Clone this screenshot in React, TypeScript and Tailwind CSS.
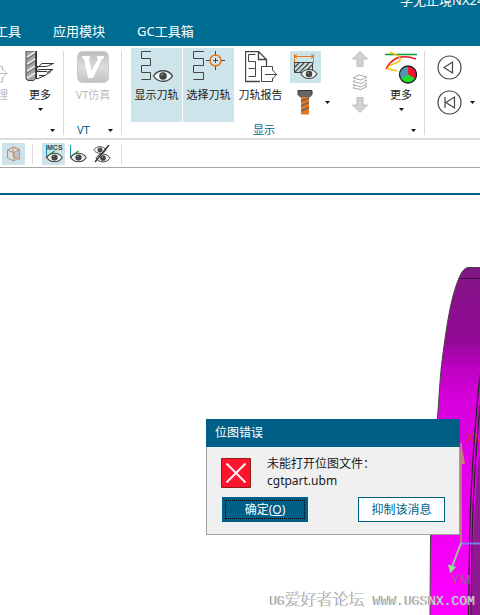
import type { ReactNode } from "react";

const MENU_ITEMS = ["工具", "应用模块", "GC工具箱"];

const Caret = () => (
  <svg width="5" height="3" viewBox="0 0 5 3" className="shrink-0" aria-hidden="true">
    <path d="M0 0h5L2.5 3z" fill="#111" />
  </svg>
);

const Divider = ({ className = "h-[84px]" }: { className?: string }) => (
  <div className={`w-px shrink-0 bg-[#d9d9d9] ${className}`} />
);

// Outline of the eye shared by the "show" icons, drawn around (x, y)
const Eye = ({ x, y, s = 1 }: { x: number; y: number; s?: number }) => (
  <g transform={`translate(${x} ${y}) scale(${s})`}>
    <path d="M-9.5 0C-5 -7 5 -7 9.5 0C5 7 -5 7 -9.5 0z" fill="#eef5f6" stroke="#444" strokeWidth="1.3" />
    <circle r="3.8" fill="#444" />
    <circle cx="-1" cy="-1.3" r="0.9" fill="#999" />
  </g>
);

const PostIcon = () => (
  <svg width="32" height="32" viewBox="0 0 32 32" fill="none" stroke="#bbb">
    <path d="M20 15.500h6.500v4M26.500 26v5H20" />
    <path d="M22 22.500h9M26 17.500l5 5-5 5" />
  </svg>
);

const MillIcon = () => (
  <svg width="32" height="32" viewBox="0 0 32 32" fill="none">
    <path d="M2 0h9.500v28l-2 1.500H4L2 28z" fill="#a4a4a4" stroke="#444" />
    <path d="M3 6l8-5M3 13l8-5M3 20l8-5M3 27l8-5" stroke="#e4e4e4" strokeWidth="2" />
    <path d="M3 8l8-5M3 15l8-5M3 22l8-5" stroke="#666" />
    <path d="M12.500 0v28" stroke="#333" />
    <path d="M13 17l5-4.500h12M13 15.500h9.500l6-2.500M13 19l4-.5h12l-6 3M13 20.500h10M15 24.500h6l6-4M13 28l8-3.500" stroke="#333" />
  </svg>
);

const VtIcon = () => (
  <svg width="32" height="32" viewBox="0 0 32 32">
    <defs>
      <linearGradient id="vt" x1="0" y1="0" x2="0" y2="1">
        <stop offset="0" stopColor="#bcbcbc" />
        <stop offset="0.5" stopColor="#dcdcdc" />
        <stop offset="1" stopColor="#c2c2c2" />
      </linearGradient>
    </defs>
    <rect x="0.500" y="0.500" width="31" height="31" rx="5" fill="url(#vt)" stroke="#ccc" />
    <path d="M5 5h8v2l-1 1 2.500 12L21 8l-1-1V5h7v2l-2 1-9 19h-5L7 8 5 7z" fill="#fff" />
  </svg>
);

const ShowPathIcon = () => (
  <svg width="32" height="32" viewBox="0 0 32 32" fill="none">
    <path d="M10 .5H.5v7h9v7h-9v7h9v7H.5" stroke="#444" />
    <Eye x={22} y={25} />
  </svg>
);

const SelectPathIcon = () => (
  <svg width="34" height="32" viewBox="0 0 34 32" fill="none">
    <path d="M12 .5H1.500v7h10v7h-10v7h10v7h-10" stroke="#444" />
    <path d="M14 9.500h5M28 9.500h5M21 9.500h5M23.500 0v5M23.500 14v5M23.500 7v5" stroke="#444" />
    <circle cx="23.500" cy="9.500" r="5.500" stroke="#e8761a" strokeWidth="1.500" />
  </svg>
);

const ReportIcon = () => (
  <svg width="32" height="32" viewBox="0 0 32 32" fill="none" stroke="#444">
    <path d="M15 30.500H.5V.5h13l8 8V15M13.500 .5v8h8" strokeWidth="1.300" />
    <path d="M10.500 3.500h-7v7h7v7h-7M10.500 17.500v8h-7" />
    <path d="M27.500 19v-3.500h-11v15h11V27M20 23.500h11.500M27.500 19l4 4.500-4 4.500" />
  </svg>
);

const StockIcon = () => (
  <svg width="27" height="28" viewBox="0 0 27 28" fill="none">
    <path d="M2.500 1v4.500M21.500 1v4.500M2.500 3.500h19M5 1.500l-2.500 2 2.500 2M19 1.500l2.500 2-2.500 2M2.500 6v4M21.500 6v4" stroke="#e8761a" />
    <path d="M2.500 9.500h18v10h-18z" fill="#c9dedf" stroke="#444" />
    <path d="M3 14l4-4M3 19l9-9M8 19l9-9M13 19l7-7" stroke="#444" strokeWidth="1.200" />
    <Eye x={17} y={21} s={0.85} />
  </svg>
);

const BoltIcon = () => (
  <svg width="16" height="25" viewBox="0 0 16 25">
    <path d="M1 .5h14v4l-3 3H4l-3-3z" fill="#666" stroke="#333" />
    <path d="M4 7h8v17.500H4z" fill="#e8761a" />
    <path d="M4 11l8-3M4 16l8-3.500M4 21l8-3.500" stroke="#666" strokeWidth="1.500" />
  </svg>
);

const ArrowIcon = ({ down = false }: { down?: boolean }) => (
  <svg width="16" height="16" viewBox="0 0 16 16">
    <path
      d={down ? "M5 .5h6V8h4.500L8 15.500.5 8H5z" : "M5 15.500h6V8h4.500L8 .5.5 8H5z"}
      fill="#d3d3d3"
      stroke="#bcbcbc"
    />
  </svg>
);

const LayersIcon = () => (
  <svg width="16" height="16" viewBox="0 0 16 16" fill="none" stroke="#aaa">
    <path d="M1 4l6-3 8 2-6 3zM1 7.500l2-1M1 7.500L9 9.500l6-3-2-.5M1 11l2-1M1 11l8 2 6-3-2-.5M1 14l2-1M1 14l8 1.500 6-3-2-.5" />
  </svg>
);

const AnalysisIcon = () => (
  <svg width="32" height="33" viewBox="0 0 32 33" fill="none">
    <path d="M0 3.500h32" stroke="#0e9a2b" strokeWidth="1.500" />
    <path d="M1 18C7 6 17 3 31 8" stroke="#f0142f" strokeWidth="1.500" />
    <path d="M5 1c5 3 11 3 10 8-1 4-13 4-12 8 1 3 6 1 9 3" stroke="#f5c000" strokeWidth="1.500" />
    <circle cx="23" cy="23.500" r="8.500" fill="#4f97b3" />
    <path d="M23 23.500V15a8.500 8.500 0 0 1 7.360 12.750z" fill="#f5142f" />
    <path d="M23 23.500l7.360 4.250a8.500 8.500 0 0 1-14.720 0z" fill="#22e02b" />
    <circle cx="23" cy="23.500" r="8.500" stroke="#222" strokeWidth="1.300" />
  </svg>
);

const PlayBackIcon = ({ toStart = false }: { toStart?: boolean }) => (
  <svg width="25" height="25" viewBox="0 0 25 25" fill="none" stroke="#444" strokeWidth="1.200">
    <circle cx="12.500" cy="12.500" r="11.500" />
    {toStart ? <path d="M8 7v11M17.500 7v11L9 12.500z" /> : <path d="M15.500 7v11L7 12.500z" />}
  </svg>
);

const CubeIcon = () => (
  <svg width="16" height="16" viewBox="0 0 16 16">
    <path d="M1.500 4L7 1l6.500 2.500v8L8 15l-6.500-3z" fill="#dedede" stroke="#999" />
    <path d="M8 6.500l5.500-3v8L8 15z" fill="#c4c4c4" />
    <path d="M1.500 4L8 6.500V15M8 6.500l5.500-3" fill="none" stroke="#999" />
    <path d="M7 1l6.500 2.500v10L7 10z" fill="none" stroke="#e28b52" />
  </svg>
);

const AxesEyeIcon = ({ label }: { label?: string }) => (
  <svg width="18" height="20" viewBox="0 0 18 20">
    <path d="M1.500 1v12" stroke="#1c8db5" />
    <path d="M1.500 13l8-6" stroke="#18a82a" strokeWidth="1.500" />
    <path d="M1 13l5 3" stroke="#e0142a" strokeWidth="1.500" />
    {label && (
      <text x="2" y="6" fontSize="7" fontWeight="bold" fontFamily="Liberation Sans" fill="#444">
        {label}
      </text>
    )}
    <Eye x={9.5} y={13.5} s={0.82} />
  </svg>
);

const HideEyesIcon = () => (
  <svg width="18" height="18" viewBox="0 0 18 18">
    <Eye x={7} y={5} s={0.65} />
    <Eye x={10} y={13} s={0.75} />
    <path d="M16 0L2 17" stroke="#333" strokeWidth="1.500" />
  </svg>
);

interface RibbonButtonProps {
  icon: ReactNode;
  label: string;
  className?: string;
  disabled?: boolean;
  menu?: boolean;
}

const RibbonButton = ({ icon, label, className = "", disabled, menu }: RibbonButtonProps) => (
  <button
    type="button"
    disabled={disabled}
    className={`flex h-[74px] shrink-0 flex-col items-center pt-[3px] whitespace-nowrap ${disabled ? "text-[#bdbdbd]" : ""} ${className}`}
  >
    <span className="flex h-9 items-start">{icon}</span>
    <span className="text-[11px] leading-4">{label}</span>
    {menu && (
      <span className="mt-[5px]">
        <Caret />
      </span>
    )}
  </button>
);

interface RibbonGroupProps {
  title?: string;
  className?: string;
  titleClassName?: string;
  children: ReactNode;
}

const RibbonGroup = ({ title, className = "", titleClassName = "", children }: RibbonGroupProps) => (
  <section className={`flex shrink-0 flex-col ${className}`}>
    <div className="flex h-[74px]">{children}</div>
    <div className="flex h-4 items-center justify-between pr-2 text-[11px] text-[#00648a]">
      <span className={titleClassName}>{title}</span>
      <button type="button" aria-label="选项">
        <Caret />
      </button>
    </div>
  </section>
);

const Ribbon = () => (
  <div className="flex h-[94px] items-start overflow-hidden border-b-2 border-[#dcdcdc] pt-[2px]">
    <RibbonGroup className="w-[63px]">
      <RibbonButton icon={<PostIcon />} label="后处理" className="-ml-6 w-8 items-end" disabled />
      <RibbonButton icon={<MillIcon />} label="更多" className="ml-4 w-8" menu />
    </RibbonGroup>
    <Divider className="mt-[3px] h-[84px]" />
    <RibbonGroup className="w-[57px]" title="VT" titleClassName="pl-[13px]">
      <RibbonButton icon={<VtIcon />} label="VT仿真" className="ml-2 w-[42px]" disabled />
    </RibbonGroup>
    <Divider className="mt-[3px] h-[84px]" />
    <RibbonGroup className="w-[302px] pl-[9px]" title="显示" titleClassName="pl-[122px]">
      <RibbonButton icon={<ShowPathIcon />} label="显示刀轨" className="w-[51px] bg-[#cde5ea]" />
      <RibbonButton icon={<SelectPathIcon />} label="选择刀轨" className="ml-px w-[51px] bg-[#cde5ea]" />
      <RibbonButton icon={<ReportIcon />} label="刀轨报告" className="ml-px w-[51px]" />
      <div className="ml-1 flex w-11 flex-col gap-[7px] pt-[3px]">
        <button type="button" aria-label="显示毛坯" className="flex h-8 w-[31px] items-center justify-center bg-[#cde5ea]">
          <StockIcon />
        </button>
        <button type="button" aria-label="显示刀具" className="flex items-center gap-3 pl-[7px]">
          <BoltIcon />
          <Caret />
        </button>
      </div>
      <div className="ml-[18px] flex w-4 flex-col gap-[7px] pt-[3px]">
        <button type="button" aria-label="上一层" disabled>
          <ArrowIcon />
        </button>
        <button type="button" aria-label="层" disabled>
          <LayersIcon />
        </button>
        <button type="button" aria-label="下一层" disabled>
          <ArrowIcon down />
        </button>
      </div>
      <RibbonButton icon={<AnalysisIcon />} label="更多" className="ml-[17px] w-8" menu />
    </RibbonGroup>
    <Divider className="mt-[3px] h-[84px]" />
    <div className="flex flex-col gap-[10px] pt-[7px] pl-3">
      <button type="button" aria-label="反向播放">
        <PlayBackIcon />
      </button>
      <button type="button" aria-label="回到起点" className="flex items-center gap-2">
        <PlayBackIcon toStart />
        <Caret />
      </button>
    </div>
  </div>
);

const Toolbar = () => (
  <div className="flex h-7 items-center border-b border-[#a6a6a6] pl-[2px]">
    <button type="button" aria-label="截面" className="flex h-[22px] w-[23px] items-center justify-center bg-[#cde5ea]">
      <CubeIcon />
    </button>
    <Divider className="ml-[7px] h-5" />
    <button type="button" aria-label="显示 MCS" className="ml-[9px] flex h-[22px] w-[23px] items-center justify-center bg-[#cde5ea]">
      <AxesEyeIcon label="MCS" />
    </button>
    <button type="button" aria-label="显示坐标系" className="ml-1">
      <AxesEyeIcon />
    </button>
    <button type="button" aria-label="隐藏" className="ml-[6px]">
      <HideEyesIcon />
    </button>
    <Divider className="ml-[10px] h-5" />
  </div>
);

// Part of the solid model visible at the right edge of the graphics window
const Model = () => (
  <svg width="60" height="420" viewBox="420 195 60 420" className="absolute top-0 right-0">
    <defs>
      <linearGradient id="solid" gradientUnits="userSpaceOnUse" x1="0" y1="267" x2="0" y2="600">
        <stop offset="0" stopColor="#7b1a80" />
        <stop offset="0.05" stopColor="#871288" />
        <stop offset="0.22" stopColor="#930a96" />
        <stop offset="0.3" stopColor="#bc00c0" />
        <stop offset="0.4" stopColor="#d800dc" />
        <stop offset="0.6" stopColor="#e200e6" />
        <stop offset="0.85" stopColor="#f400f6" />
        <stop offset="1" stopColor="#ff00ff" />
      </linearGradient>
    </defs>
    <path
      d="M480 267.500h-12C464 268 461 273 459 278C453 292 449 312 446 332C443 352 441 368 440 382L437.500 418C434 455 431 500 430.500 535L430 615H480z"
      fill="url(#solid)"
    />
    <path
      d="M480 267.500h-12C464 268 461 273 459 278C453 292 449 312 446 332C443 352 441 368 440 382L437.500 418C434 455 431 500 430.500 535L430 615"
      fill="none"
      stroke="#444"
    />
    <path d="M460 278.500h20" stroke="#3a0a3c" />
    <path d="M480 450C476 480 474 520 473 545L471.500 615H480z" fill="#8e1a90" />
    <path
      d="M480 375C474 430 470 500 469.500 545L468.500 615M480 405C475 460 472.500 510 472 545L471 615"
      fill="none"
      stroke="#222"
      strokeWidth="1.200"
    />
    <path d="M461 443v100" stroke="#b87a80" strokeWidth="2" />
    <path d="M461 443l4 21h-4z" fill="#c98078" />
    <path d="M461 543.500h19" stroke="#7a80e8" strokeWidth="2" />
    <path d="M461 543l-9 24" stroke="#a0c8a0" strokeWidth="2" />
    <path d="M448.500 565l7 2-5 6z" fill="#98e098" stroke="#8cc88c" />
    <text x="466" y="442" fontSize="12" fontFamily="Liberation Sans" fill="#c83a30">
      XM
    </text>
    <text x="451" y="584" fontSize="13" fontFamily="Liberation Sans" fill="#8a6a8a">
      YM
    </text>
  </svg>
);

const ErrorDialog = () => (
  <div role="alertdialog" aria-labelledby="dialog-title" className="absolute top-[224px] right-5 w-[254px]">
    <h2 id="dialog-title" className="flex h-7 items-center bg-[#005f87] px-[9px] text-xs text-white">
      位图错误
    </h2>
    <div className="border border-t-0 border-[#a0a0a0] bg-[#f0f0f0] px-[14px] pt-2 pb-3">
      <div className="flex items-start gap-4">
        <svg width="30" height="30" viewBox="0 0 30 30" className="mt-[3px]" aria-hidden="true">
          <path d="M.5 .5h29v29H.5z" fill="#ff142d" stroke="#8e2018" />
          <path d="M5.500 5.500l19 19M24.500 5.500l-19 19" stroke="#fff" strokeWidth="1.800" />
        </svg>
        <p className="text-xs leading-[17px] text-[#1a1a1a]">
          未能打开位图文件：
          <br />
          cgtpart.ubm
        </p>
      </div>
      <div className="mt-2 flex justify-between pl-px text-xs">
        <button type="button" className="h-[25px] w-[86px] bg-[#005f87] p-[3px] text-white">
          <span className="flex h-full items-center justify-center border border-dotted border-black">
            确定(<u>O</u>)
          </span>
        </button>
        <button type="button" className="h-[25px] w-[87px] border border-[#005f87] bg-white text-[#005f87]">
          抑制该消息
        </button>
      </div>
    </div>
  </div>
);

export default function App() {
  return (
    <div className="flex min-h-screen flex-col overflow-hidden bg-white font-['Noto_Sans','Noto_Sans_CJK_SC',sans-serif] text-[#1a1a1a]">
      <header className="h-[46px] overflow-hidden bg-[#006e93] text-[13px] text-white">
        <div className="-mt-2 pl-[400px] leading-4 whitespace-nowrap">学无止境NX24</div>
        <nav className="-ml-[5px] flex gap-8 pt-[14px] leading-[18px] whitespace-nowrap">
          {MENU_ITEMS.map(item => (
            <a key={item} href="#">
              {item}
            </a>
          ))}
        </nav>
      </header>
      <Ribbon />
      <Toolbar />
      <div className="h-[25px] shrink-0" />
      <main className="relative min-h-[420px] flex-1 overflow-hidden border-t-2 border-[#005f87]">
        <Model />
        <ErrorDialog />
        <p className="absolute right-[5px] bottom-1 flex items-center gap-2 font-['Liberation_Mono','Noto_Sans_CJK_SC',monospace] text-[13px] leading-[18px] whitespace-nowrap text-[#dcdcdc] [text-shadow:-1px_0_0_#808080]">
          <span>
            UG<span className="text-base leading-[18px] font-light">爱好者论坛</span>
          </span>
          <span>WWW.UGSNX.COM</span>
        </p>
      </main>
    </div>
  );
}
